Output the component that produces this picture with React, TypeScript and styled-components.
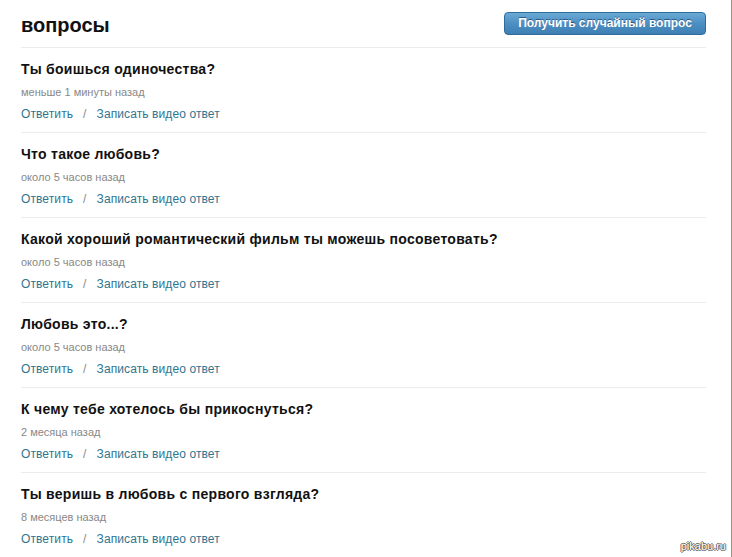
import React from "react";
import styled, { createGlobalStyle } from "styled-components";

const Global = createGlobalStyle`
  html, body { margin: 0; padding: 0; background: #fff; }
  body { font-family: Arial, "Liberation Sans", sans-serif; }
`;

const Page = styled.div`
  position: relative;
  width: 731px;
  height: 557px;
  border-right: 1px solid #9e9a4e;
  box-sizing: content-box;
  overflow: hidden;
  background: #fff;
`;

const Content = styled.div`
  width: 685px;
  margin-left: 21px;
  display: flex;
  flex-direction: column;
`;

const Header = styled.div`
  height: 47px;
  display: flex;
  align-items: flex-start;
  justify-content: space-between;
`;

const Title = styled.h1`
  margin: 12px 0 0;
  font: bold 20px/26px "Liberation Sans", Arial, sans-serif;
  color: #111;
`;

const RandomButton = styled.button`
  margin-top: 12px;
  width: 202px;
  height: 23px;
  padding: 0;
  border: 1px solid #2f6b9b;
  border-radius: 4px;
  background: linear-gradient(#6aaad6, #4d8fc3 50%, #3e7fb4);
  color: #fff;
  font: bold 12px/21px "Liberation Sans", Arial, sans-serif;
  text-shadow: 0 -1px 0 rgba(20, 60, 100, 0.7);
  cursor: pointer;
  box-sizing: border-box;
`;

const Item = styled.div`
  border-top: 1px solid #ececec;
  padding: 12px 0 10px;
  display: flex;
  flex-direction: column;
`;

const Question = styled.div`
  font: bold 14px/18px "Liberation Sans", Arial, sans-serif;
  color: #111;
  letter-spacing: 0.28px;
`;

const Time = styled.div`
  margin-top: 7px;
  font: 11px/14px "Liberation Sans", Arial, sans-serif;
  color: #888;
`;

const Links = styled.div`
  margin-top: 7px;
  display: flex;
  align-items: center;
  font: 12px/16px "Liberation Sans", Arial, sans-serif;
  letter-spacing: 0.1px;
  color: #2f7590;
`;

const LinkText = styled.a`
  color: #2f7590;
  text-decoration: none;
  cursor: pointer;
`;

const Slash = styled.span`
  color: #8a8a8a;
  margin: 0 10px 0 10px;
`;

const Watermark = styled.div`
  position: absolute;
  right: 5px;
  bottom: 5px;
  font: 11px/12px "Liberation Sans", Arial, sans-serif;
  color: #fff;
  text-shadow: -1px 0 #666, 1px 0 #666, 0 -1px #666, 0 1px #666;
`;

const questions = [
  { q: "Ты боишься одиночества?", t: "меньше 1 минуты назад" },
  { q: "Что такое любовь?", t: "около 5 часов назад" },
  { q: "Какой хороший романтический фильм ты можешь посоветовать?", t: "около 5 часов назад" },
  { q: "Любовь это...?", t: "около 5 часов назад" },
  { q: "К чему тебе хотелось бы прикоснуться?", t: "2 месяца назад" },
  { q: "Ты веришь в любовь с первого взгляда?", t: "8 месяцев назад" },
];

export default function App() {
  return (
    <Page>
      <Global />
      <Content>
        <Header>
          <Title>вопросы</Title>
          <RandomButton>Получить случайный вопрос</RandomButton>
        </Header>
        {questions.map((it, i) => (
          <Item key={i}>
            <Question>{it.q}</Question>
            <Time>{it.t}</Time>
            <Links>
              <LinkText>Ответить</LinkText>
              <Slash>/</Slash>
              <LinkText>Записать видео ответ</LinkText>
            </Links>
          </Item>
        ))}
      </Content>
      <Watermark>pikabu.ru</Watermark>
    </Page>
  );
}
